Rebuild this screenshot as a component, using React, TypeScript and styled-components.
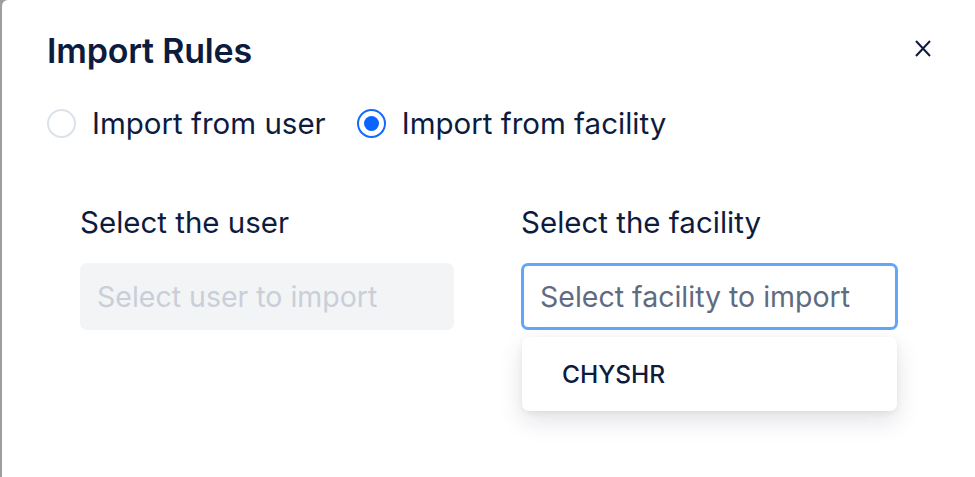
import React from "react";
import styled, { createGlobalStyle } from "styled-components";

const GlobalStyle = createGlobalStyle`
  html, body {
    margin: 0;
    padding: 0;
    background: #9e9e9e;
  }
  body {
    font-family: Inter, "Open Sans", "Liberation Sans", sans-serif;
    color: #0d1b3e;
  }
`;

const Modal = styled.div`
  margin-left: 2px;
  height: 477px;
  background: #fff;
  border-top-left-radius: 6px;
  box-sizing: border-box;
  padding: 30px 42px 0 45px;
`;

const Header = styled.header`
  display: flex;
  align-items: center;
  justify-content: space-between;
  height: 40px;
`;

const Title = styled.h2`
  margin: 0;
  font-size: 34px;
  font-weight: 600;
  letter-spacing: -0.2px;
  color: #0d1b3e;
`;

const CloseButton = styled.button`
  border: 0;
  background: none;
  padding: 0;
  width: 20px;
  height: 20px;
  margin-top: -3px;
  display: flex;
  align-items: center;
  justify-content: center;
  cursor: pointer;
`;

const RadioRow = styled.div`
  display: flex;
  align-items: center;
  gap: 31px;
  margin-top: 35px;
`;

const RadioLabel = styled.label`
  display: flex;
  align-items: center;
  gap: 16px;
  font-size: 29.5px;
  color: #0d1b3e;
  cursor: pointer;
`;

const RadioCircle = styled.span<{ $checked?: boolean }>`
  width: 29px;
  height: 29px;
  box-sizing: border-box;
  border-radius: 50%;
  border: 2px solid ${(p) => (p.$checked ? "#1469ff" : "#dce2eb")};
  display: flex;
  align-items: center;
  justify-content: center;

  &::after {
    content: "";
    width: 15px;
    height: 15px;
    border-radius: 50%;
    background: ${(p) => (p.$checked ? "#0a64ff" : "transparent")};
  }
`;

const Fields = styled.div`
  display: grid;
  grid-template-columns: 374px 377px;
  column-gap: 67px;
  margin-top: 61px;
  padding-left: 33px;
`;

const Field = styled.div`
  display: flex;
  flex-direction: column;
  position: relative;
`;

const FieldLabel = styled.div`
  font-size: 29.5px;
  color: #0d1b3e;
  height: 40px;
  line-height: 40px;
  margin-bottom: 21px;
`;

const Input = styled.div<{ $disabled?: boolean; $focused?: boolean }>`
  height: 67px;
  box-sizing: border-box;
  border-radius: 7px;
  display: flex;
  align-items: center;
  font-size: 28.5px;
  padding-left: ${(p) => (p.$focused ? "16px" : "17px")};
  background: ${(p) => (p.$disabled ? "#f3f4f6" : "#fff")};
  color: ${(p) => (p.$disabled ? "#c9cfd9" : "#5f6b80")};
  border: ${(p) => (p.$focused ? "3px solid #62a6fb" : "0")};
  white-space: nowrap;
`;

const Menu = styled.ul`
  position: absolute;
  top: 135px;
  left: 1px;
  right: 1px;
  margin: 0;
  padding: 0;
  list-style: none;
  background: #fff;
  border-radius: 7px;
  box-shadow: 0 10px 24px rgba(15, 25, 50, 0.12), 0 2px 6px rgba(15, 25, 50, 0.06);
`;

const MenuItem = styled.li`
  height: 74px;
  display: flex;
  align-items: center;
  padding-left: 40px;
  font-size: 24.5px;
  font-weight: 500;
  color: #0d1b3e;
`;

const App: React.FC = () => (
  <>
    <GlobalStyle />
    <Modal>
      <Header>
        <Title>Import Rules</Title>
        <CloseButton aria-label="Close">
          <svg width="16" height="17" viewBox="0 0 16 17" fill="none">
            <path d="M1 1l14 15M15 1L1 16" stroke="#0d1b3e" strokeWidth="2" />
          </svg>
        </CloseButton>
      </Header>

      <RadioRow>
        <RadioLabel>
          <RadioCircle />
          Import from user
        </RadioLabel>
        <RadioLabel>
          <RadioCircle $checked />
          Import from facility
        </RadioLabel>
      </RadioRow>

      <Fields>
        <Field>
          <FieldLabel>Select the user</FieldLabel>
          <Input $disabled>Select user to import</Input>
        </Field>
        <Field>
          <FieldLabel>Select the facility</FieldLabel>
          <Input $focused>Select facility to import</Input>
          <Menu>
            <MenuItem>CHYSHR</MenuItem>
          </Menu>
        </Field>
      </Fields>
    </Modal>
  </>
);

export default App;
